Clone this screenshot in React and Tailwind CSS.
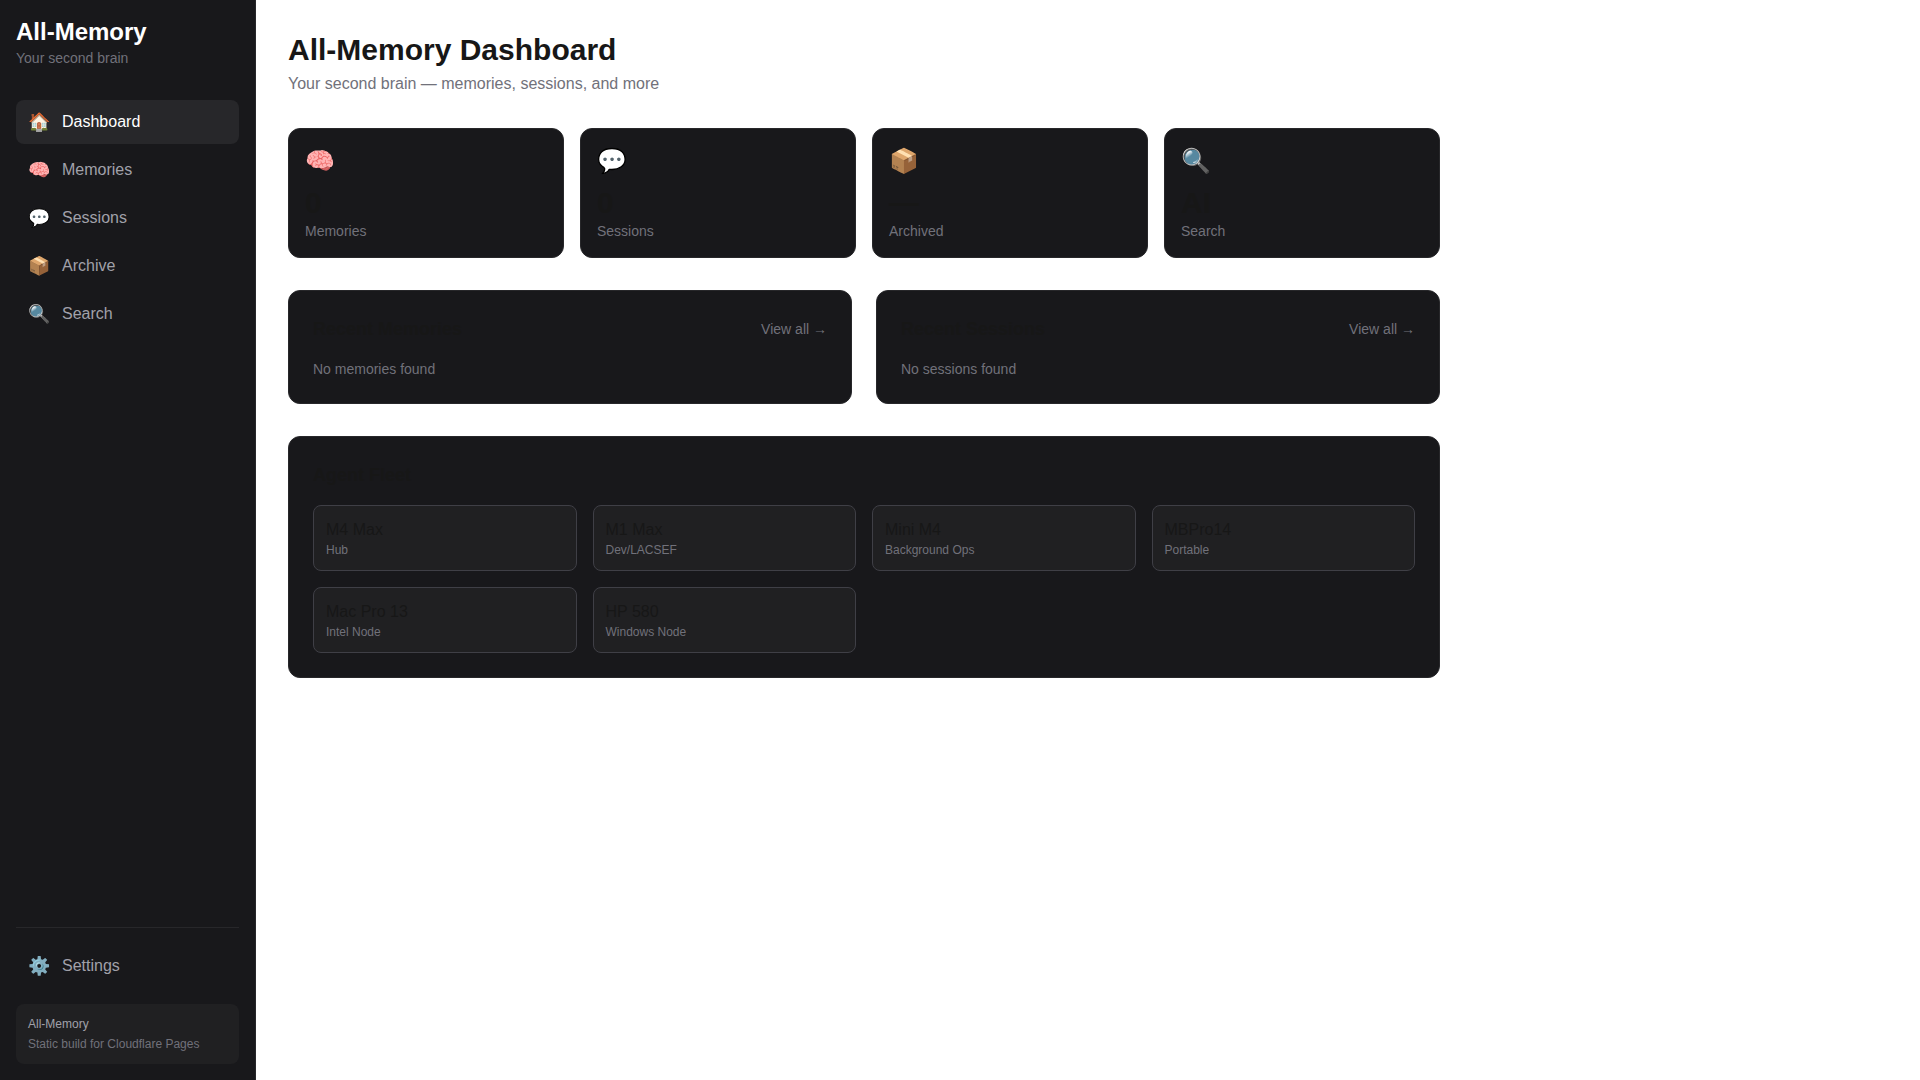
const navItems = [
  { href: "#dashboard", label: "Dashboard", icon: "🏠" },
  { href: "#memories", label: "Memories", icon: "🧠" },
  { href: "#sessions", label: "Sessions", icon: "💬" },
  { href: "#archive", label: "Archive", icon: "📦" },
  { href: "#search", label: "Search", icon: "🔍" },
];

const stats = [
  { href: "#memories", label: "Memories", value: "0", icon: "🧠" },
  { href: "#sessions", label: "Sessions", value: "0", icon: "💬" },
  { href: "#archive", label: "Archived", value: "—", icon: "📦" },
  { href: "#search", label: "Search", value: "AI", icon: "🔍" },
];

const agents = [
  { name: "M4 Max", role: "Hub" },
  { name: "M1 Max", role: "Dev/LACSEF" },
  { name: "Mini M4", role: "Background Ops" },
  { name: "MBPro14", role: "Portable" },
  { name: "Mac Pro 13", role: "Intel Node" },
  { name: "HP 580", role: "Windows Node" },
];

function NavLink({ href, icon, label, active }) {
  return (
    <a
      href={href}
      aria-current={active ? "page" : undefined}
      className={`flex items-center gap-3 rounded-lg px-3 py-2 transition-colors ${
        active
          ? "bg-[#27272a] text-white"
          : "text-[#a1a1aa] hover:bg-[#27272a] hover:text-white"
      }`}
    >
      <span className="text-lg">{icon}</span>
      <span>{label}</span>
    </a>
  );
}

function Sidebar() {
  return (
    <aside className="sticky top-0 flex h-screen w-64 shrink-0 flex-col border-r border-[#27272a] bg-[#18181b] p-4">
      <div className="mb-8">
        <h1 className="text-2xl font-bold text-white">All-Memory</h1>
        <p className="text-sm text-[#71717a]">Your second brain</p>
      </div>

      <nav className="flex-1 space-y-1">
        {navItems.map((item) => (
          <NavLink key={item.href} {...item} active={item.label === "Dashboard"} />
        ))}
      </nav>

      <div className="border-t border-[#27272a] pt-4">
        <NavLink href="#settings" icon="⚙️" label="Settings" />
        <div className="mt-4 rounded-lg bg-[#27272a]/50 p-3 text-xs">
          <p className="text-[#a1a1aa]">All-Memory</p>
          <p className="mt-1 text-[#71717a]">Static build for Cloudflare Pages</p>
        </div>
      </div>
    </aside>
  );
}

function StatCard({ href, icon, value, label }) {
  return (
    <a
      href={href}
      className="rounded-xl border border-[#27272a] bg-[#18181b] p-4 transition-colors hover:border-[#3f3f46]"
    >
      <div className="mb-2 text-2xl">{icon}</div>
      <div className="text-3xl font-bold">{value}</div>
      <div className="text-sm text-[#71717a]">{label}</div>
    </a>
  );
}

function RecentPanel({ title, href, empty }) {
  return (
    <section className="rounded-xl border border-[#27272a] bg-[#18181b] p-6">
      <div className="mb-4 flex items-center justify-between">
        <h2 className="text-lg font-semibold">{title}</h2>
        <a href={href} className="text-sm text-[#71717a] hover:text-white">
          View all →
        </a>
      </div>
      <p className="text-sm text-[#71717a]">{empty}</p>
    </section>
  );
}

export default function App() {
  return (
    <div className="flex min-h-screen bg-white font-[Arial,Helvetica,sans-serif] text-[#171717] antialiased">
      <Sidebar />
      <main className="min-w-0 flex-1 p-8">
        <div className="max-w-6xl">
          <header className="mb-8">
            <h1 className="text-3xl font-bold">All-Memory Dashboard</h1>
            <p className="mt-1 text-[#71717a]">
              Your second brain — memories, sessions, and more
            </p>
          </header>

          <div className="mb-8 grid grid-cols-2 gap-4 md:grid-cols-4">
            {stats.map((stat) => (
              <StatCard key={stat.label} {...stat} />
            ))}
          </div>

          <div className="grid grid-cols-1 gap-6 lg:grid-cols-2">
            <RecentPanel
              title="Recent Memories"
              href="#memories"
              empty="No memories found"
            />
            <RecentPanel
              title="Recent Sessions"
              href="#sessions"
              empty="No sessions found"
            />
          </div>

          <section className="mt-8 rounded-xl border border-[#27272a] bg-[#18181b] p-6">
            <h2 className="mb-4 text-lg font-semibold">Agent Fleet</h2>
            <div className="grid grid-cols-2 gap-4 md:grid-cols-4">
              {agents.map((agent) => (
                <div
                  key={agent.name}
                  className="rounded-lg border border-[#3f3f46] bg-[#27272a]/50 p-3"
                >
                  <div className="font-medium">{agent.name}</div>
                  <div className="text-xs text-[#71717a]">{agent.role}</div>
                </div>
              ))}
            </div>
          </section>
        </div>
      </main>
    </div>
  );
}
